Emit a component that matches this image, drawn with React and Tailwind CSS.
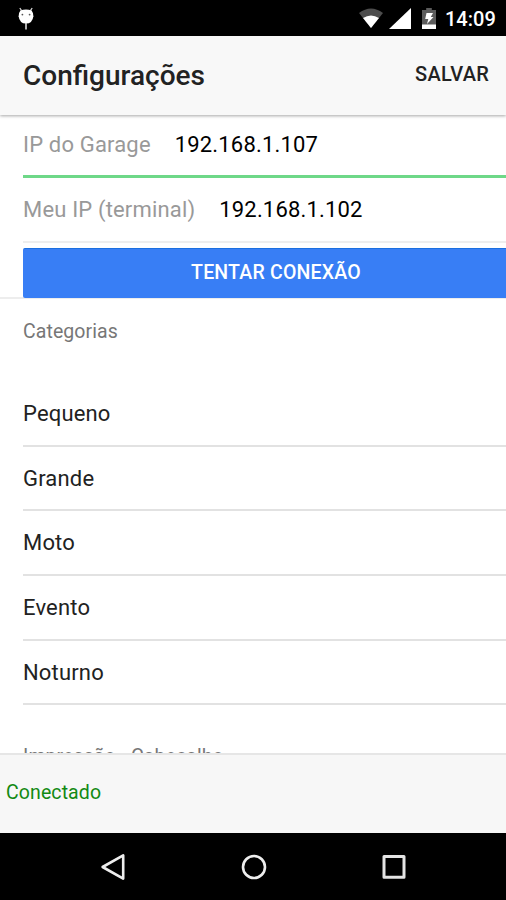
const categories = ['Pequeno', 'Grande', 'Moto', 'Evento', 'Noturno'];

const StatusBar = () => (
    <div className="h-[36px] shrink-0 bg-black flex items-center justify-between pl-[17px] pr-[11px]">
        <svg width="18" height="24" viewBox="0 0 18 24" className="mt-px">
            <path d="M4.6 3.6L2.8 1M13.4 3.6L15.2 1" stroke="#ddd" strokeWidth="1.2" />
            <path d="M3.4 3.4Q9 1.4 14.6 3.4Q16.6 6 16.4 9.2Q15.4 16.6 9 16.6Q2.6 16.6 1.6 9.2Q1.4 6 3.4 3.4Z" fill="#fff" />
            <circle cx="5.4" cy="7.6" r="0.9" fill="#555" />
            <circle cx="12.6" cy="7.6" r="0.9" fill="#555" />
            <path d="M9 16V22.4" stroke="#ddd" strokeWidth="1.6" />
        </svg>
        <div className="flex items-center">
            <svg width="26" height="20" viewBox="0 0 26 20">
                <path d="M1 5Q13 -4 25 5L13 20Z" fill="#4d4d4d" />
                <path d="M5 10Q13 5 21 10L13 20Z" fill="#fff" />
            </svg>
            <svg width="22" height="21" viewBox="0 0 22 21" className="ml-[5px]">
                <path d="M22 0V21H0Z" fill="#fff" />
            </svg>
            <svg width="14" height="21" viewBox="0 0 14 21" className="ml-[11px]">
                <path d="M4.2 0H9.8V2H14V21H0V2H4.2Z" fill="#5c5c5c" />
                <path d="M0 16.5H14V21H0Z" fill="#fff" />
                <path d="M4.5 5H11L8.8 9H11.5L5 16L6.3 11H3.2Z" fill="#fff" />
            </svg>
            <span className="ml-[9px] w-[50px] text-[20px] leading-6 font-medium text-white whitespace-nowrap pt-px">14:09</span>
        </div>
    </div>
);

const Field = ({ label, value }) => (
    <>
        <span className="text-[#999]">{label}</span>
        <span className="ml-[24px] text-black">{value}</span>
    </>
);

const NavBar = () => (
    <div className="h-[67px] shrink-0 bg-black flex items-center justify-between pl-[100px] pr-[98px]">
        <svg width="27" height="30" viewBox="0 0 27 30" fill="none" stroke="#eee" strokeWidth="2.6" strokeLinejoin="round">
            <path d="M23.2 3.4V26.6L2.6 15Z" />
        </svg>
        <svg width="28" height="28" viewBox="0 0 28 28" fill="none" stroke="#eee" strokeWidth="2.6">
            <circle cx="14" cy="14" r="11" />
        </svg>
        <svg width="28" height="28" viewBox="0 0 28 28" fill="none" stroke="#e4e4e4" strokeWidth="3" strokeLinejoin="round">
            <path d="M4 3.6H24V24.2H4Z" />
        </svg>
    </div>
);

const App = () => {
    return (
        <div className="w-[506px] h-[900px] overflow-hidden flex flex-col bg-white font-[Roboto,sans-serif]">
            <StatusBar />

            <header className="relative h-[79px] shrink-0 bg-[#f8f8f8] flex items-center justify-between pl-[23px] pr-[17px] shadow-[0_1px_3px_rgba(0,0,0,0.35)]">
                <h1 className="text-[28px] leading-8 font-medium text-[#222]">Configurações</h1>
                <button className="text-[20px] leading-6 tracking-[0.25px] font-medium text-[#222] pb-[4px]">SALVAR</button>
            </header>

            <main className="flex-1 min-h-0 overflow-hidden text-[22px] leading-6 tracking-[0.17px]">
                <div className="ml-[23px] h-[63px] border-b-[3px] border-[#6ed888] flex items-center">
                    <Field label="IP do Garage" value="192.168.1.107" />
                </div>
                <div className="ml-[23px] h-[65px] border-b-2 border-[#eee] flex items-center pt-px">
                    <Field label="Meu IP (terminal)" value="192.168.1.102" />
                </div>
                <div className="h-[56px] border-b-2 border-[#ededed] pt-[5px] pl-[23px]">
                    <button className="block w-[506px] h-[50px] rounded-[2px] bg-[#387ef5] border-t border-[#1b6fe0] text-[19.5px] leading-6 tracking-[0.2px] font-medium text-white pb-[1px]">
                        TENTAR CONEXÃO
                    </button>
                </div>

                <div className="h-[83px] pl-[23px] pt-[21px] text-[19.5px] leading-6 tracking-[0.08px] text-[#777]">Categorias</div>

                <ul className="pl-[23px]">
                    {categories.map(name => (
                        <li key={name} className="h-[64.7px] border-b-2 border-[#e2e2e2] flex items-center pt-px text-[#222]">
                            {name}
                        </li>
                    ))}
                </ul>

                <div className="pl-[23px] pt-[39.5px] text-[19.5px] leading-6 tracking-[0.08px] text-[#777]">Impressão - Cabeçalho</div>
            </main>

            <footer className="h-[80px] shrink-0 bg-[#f7f7f7] border-t-2 border-[#e6e6e6] px-[6px] pb-[2px] flex items-center text-[19.5px] leading-6 tracking-[0.1px] text-[#138a13]">
                Conectado
            </footer>
            <NavBar />
        </div>
    );
};

export default App;
